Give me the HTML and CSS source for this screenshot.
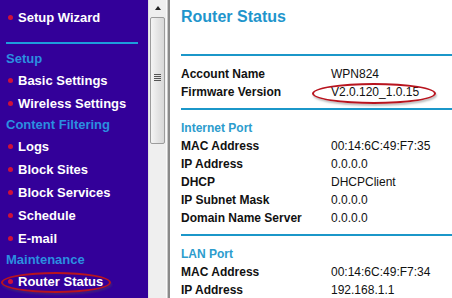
FILE: index.html
```html
<!DOCTYPE html>
<html>
<head>
<meta charset="utf-8">
<link rel="stylesheet" href="styles.css">
</head>
<body>
<div class="page">
  <nav class="sidebar">
    <div class="item"><span class="dot"></span>Setup Wizard</div>
    <div class="rule"></div>
    <div class="head">Setup</div>
    <div class="item"><span class="dot"></span>Basic Settings</div>
    <div class="item"><span class="dot"></span>Wireless Settings</div>
    <div class="head">Content Filtering</div>
    <div class="item"><span class="dot"></span>Logs</div>
    <div class="item"><span class="dot"></span>Block Sites</div>
    <div class="item"><span class="dot"></span>Block Services</div>
    <div class="item"><span class="dot"></span>Schedule</div>
    <div class="item"><span class="dot"></span>E-mail</div>
    <div class="head">Maintenance</div>
    <div class="item"><span class="dot"></span>Router Status</div>
    <div class="ring ring-nav"></div>
  </nav>
  <div class="scrollbar">
    <div class="arrow"></div>
    <div class="thumb"><div class="grip"><i></i><i></i><i></i><i></i></div></div>
  </div>
  <div class="divider"></div>
  <main class="content">
    <h1 class="title">Router Status</h1>
    <section class="sec sec-first">
      <div class="row"><span class="k">Account Name</span><span class="v">WPN824</span></div>
      <div class="row"><span class="k">Firmware Version</span><span class="v">V2.0.120_1.0.15</span></div>
    </section>
    <section class="sec">
      <div class="sub">Internet Port</div>
      <div class="row"><span class="k">MAC Address</span><span class="v">00:14:6C:49:F7:35</span></div>
      <div class="row"><span class="k">IP Address</span><span class="v">0.0.0.0</span></div>
      <div class="row"><span class="k">DHCP</span><span class="v">DHCPClient</span></div>
      <div class="row"><span class="k">IP Subnet Mask</span><span class="v">0.0.0.0</span></div>
      <div class="row"><span class="k">Domain Name Server</span><span class="v">0.0.0.0</span></div>
    </section>
    <section class="sec">
      <div class="sub">LAN Port</div>
      <div class="row"><span class="k">MAC Address</span><span class="v">00:14:6C:49:F7:34</span></div>
      <div class="row"><span class="k">IP Address</span><span class="v">192.168.1.1</span></div>
    </section>
  </main>
  <div class="ring ring-fw"></div>
</div>
</body>
</html>
```
FILE: styles.css
```css
* { box-sizing: border-box; }
html, body { margin: 0; padding: 0; }
body {
  font-family: "Liberation Sans", Arial, sans-serif;
  background: #fff;
  width: 452px;
  height: 298px;
  overflow: hidden;
}
.page {
  position: relative;
  display: flex;
  height: 298px;
}
.sidebar {
  position: relative;
  width: 148px;
  flex: none;
  background: #330099;
  padding-top: 6px;
  overflow: hidden;
}
.item {
  display: flex;
  align-items: center;
  height: 23px;
  padding-left: 8px;
  color: #fff;
  font-weight: bold;
  font-size: 13px;
  white-space: nowrap;
}
.dot {
  width: 5px;
  height: 5px;
  border-radius: 50%;
  background: #d0103a;
  margin-right: 5px;
  flex: none;
}
.rule {
  height: 2px;
  margin: 13px 10px 5px 6px;
  background: #1e9ddc;
}
.head {
  height: 20px;
  line-height: 20px;
  padding-left: 6px;
  color: #2b8fe0;
  font-weight: bold;
  font-size: 13px;
  white-space: nowrap;
}
.scrollbar {
  width: 18px;
  flex: none;
  background: #efefef;
  border-left: 1px solid #e2e2e2;
  display: flex;
  flex-direction: column;
  align-items: center;
}
.arrow {
  margin-top: 6px;
  width: 0;
  height: 0;
  border-left: 3px solid transparent;
  border-right: 3px solid transparent;
  border-bottom: 4px solid #222;
}
.thumb {
  margin-top: 7px;
  width: 15px;
  height: 127px;
  border: 1px solid #9c9c9c;
  border-radius: 2px;
  background: linear-gradient(to right, #f4f4f4, #e2e2e2 60%, #d8d8d8);
  display: flex;
  align-items: center;
  justify-content: center;
}
.grip {
  display: flex;
  flex-direction: column;
  gap: 1px;
  margin-top: -6px;
}
.grip i {
  display: block;
  width: 7px;
  height: 1px;
  background: #555;
}
.divider {
  width: 4px;
  flex: none;
  border-left: 1px solid #fafafa;
  border-right: 2px solid #8a8a8a;
  background: #c8c8c8;
}
.content {
  flex: 1;
  padding-left: 11px;
  color: #111;
  font-size: 12px;
}
.title {
  margin: 7px 0 0 0;
  height: 20px;
  line-height: 20px;
  font-size: 16px;
  font-weight: bold;
  color: #1f95cc;
}
.sec {
  border-top: 2px solid #1b97c9;
  padding-top: 9px;
  padding-bottom: 7px;
}
.sec-first {
  margin-top: 27px;
  padding-top: 10px;
  padding-bottom: 7px;
}
.sub {
  height: 18px;
  line-height: 18px;
  font-weight: bold;
  color: #2c9ccd;
}
.row {
  display: flex;
  height: 18px;
  line-height: 18px;
  white-space: nowrap;
}
.sec-first .row { height: 17.5px; line-height: 17.5px; }
.k {
  width: 150px;
  font-weight: bold;
}
.v { font-weight: normal; }
.ring {
  position: absolute;
  border: 2px solid #b8141e;
  border-radius: 50%;
  box-shadow: 1px 2px 2px rgba(80, 80, 80, 0.35);
  pointer-events: none;
}
.ring-nav {
  left: 1px;
  top: 272px;
  width: 110px;
  height: 21px;
}
.ring-fw {
  left: 312px;
  top: 83px;
  width: 124px;
  height: 21px;
}
```
